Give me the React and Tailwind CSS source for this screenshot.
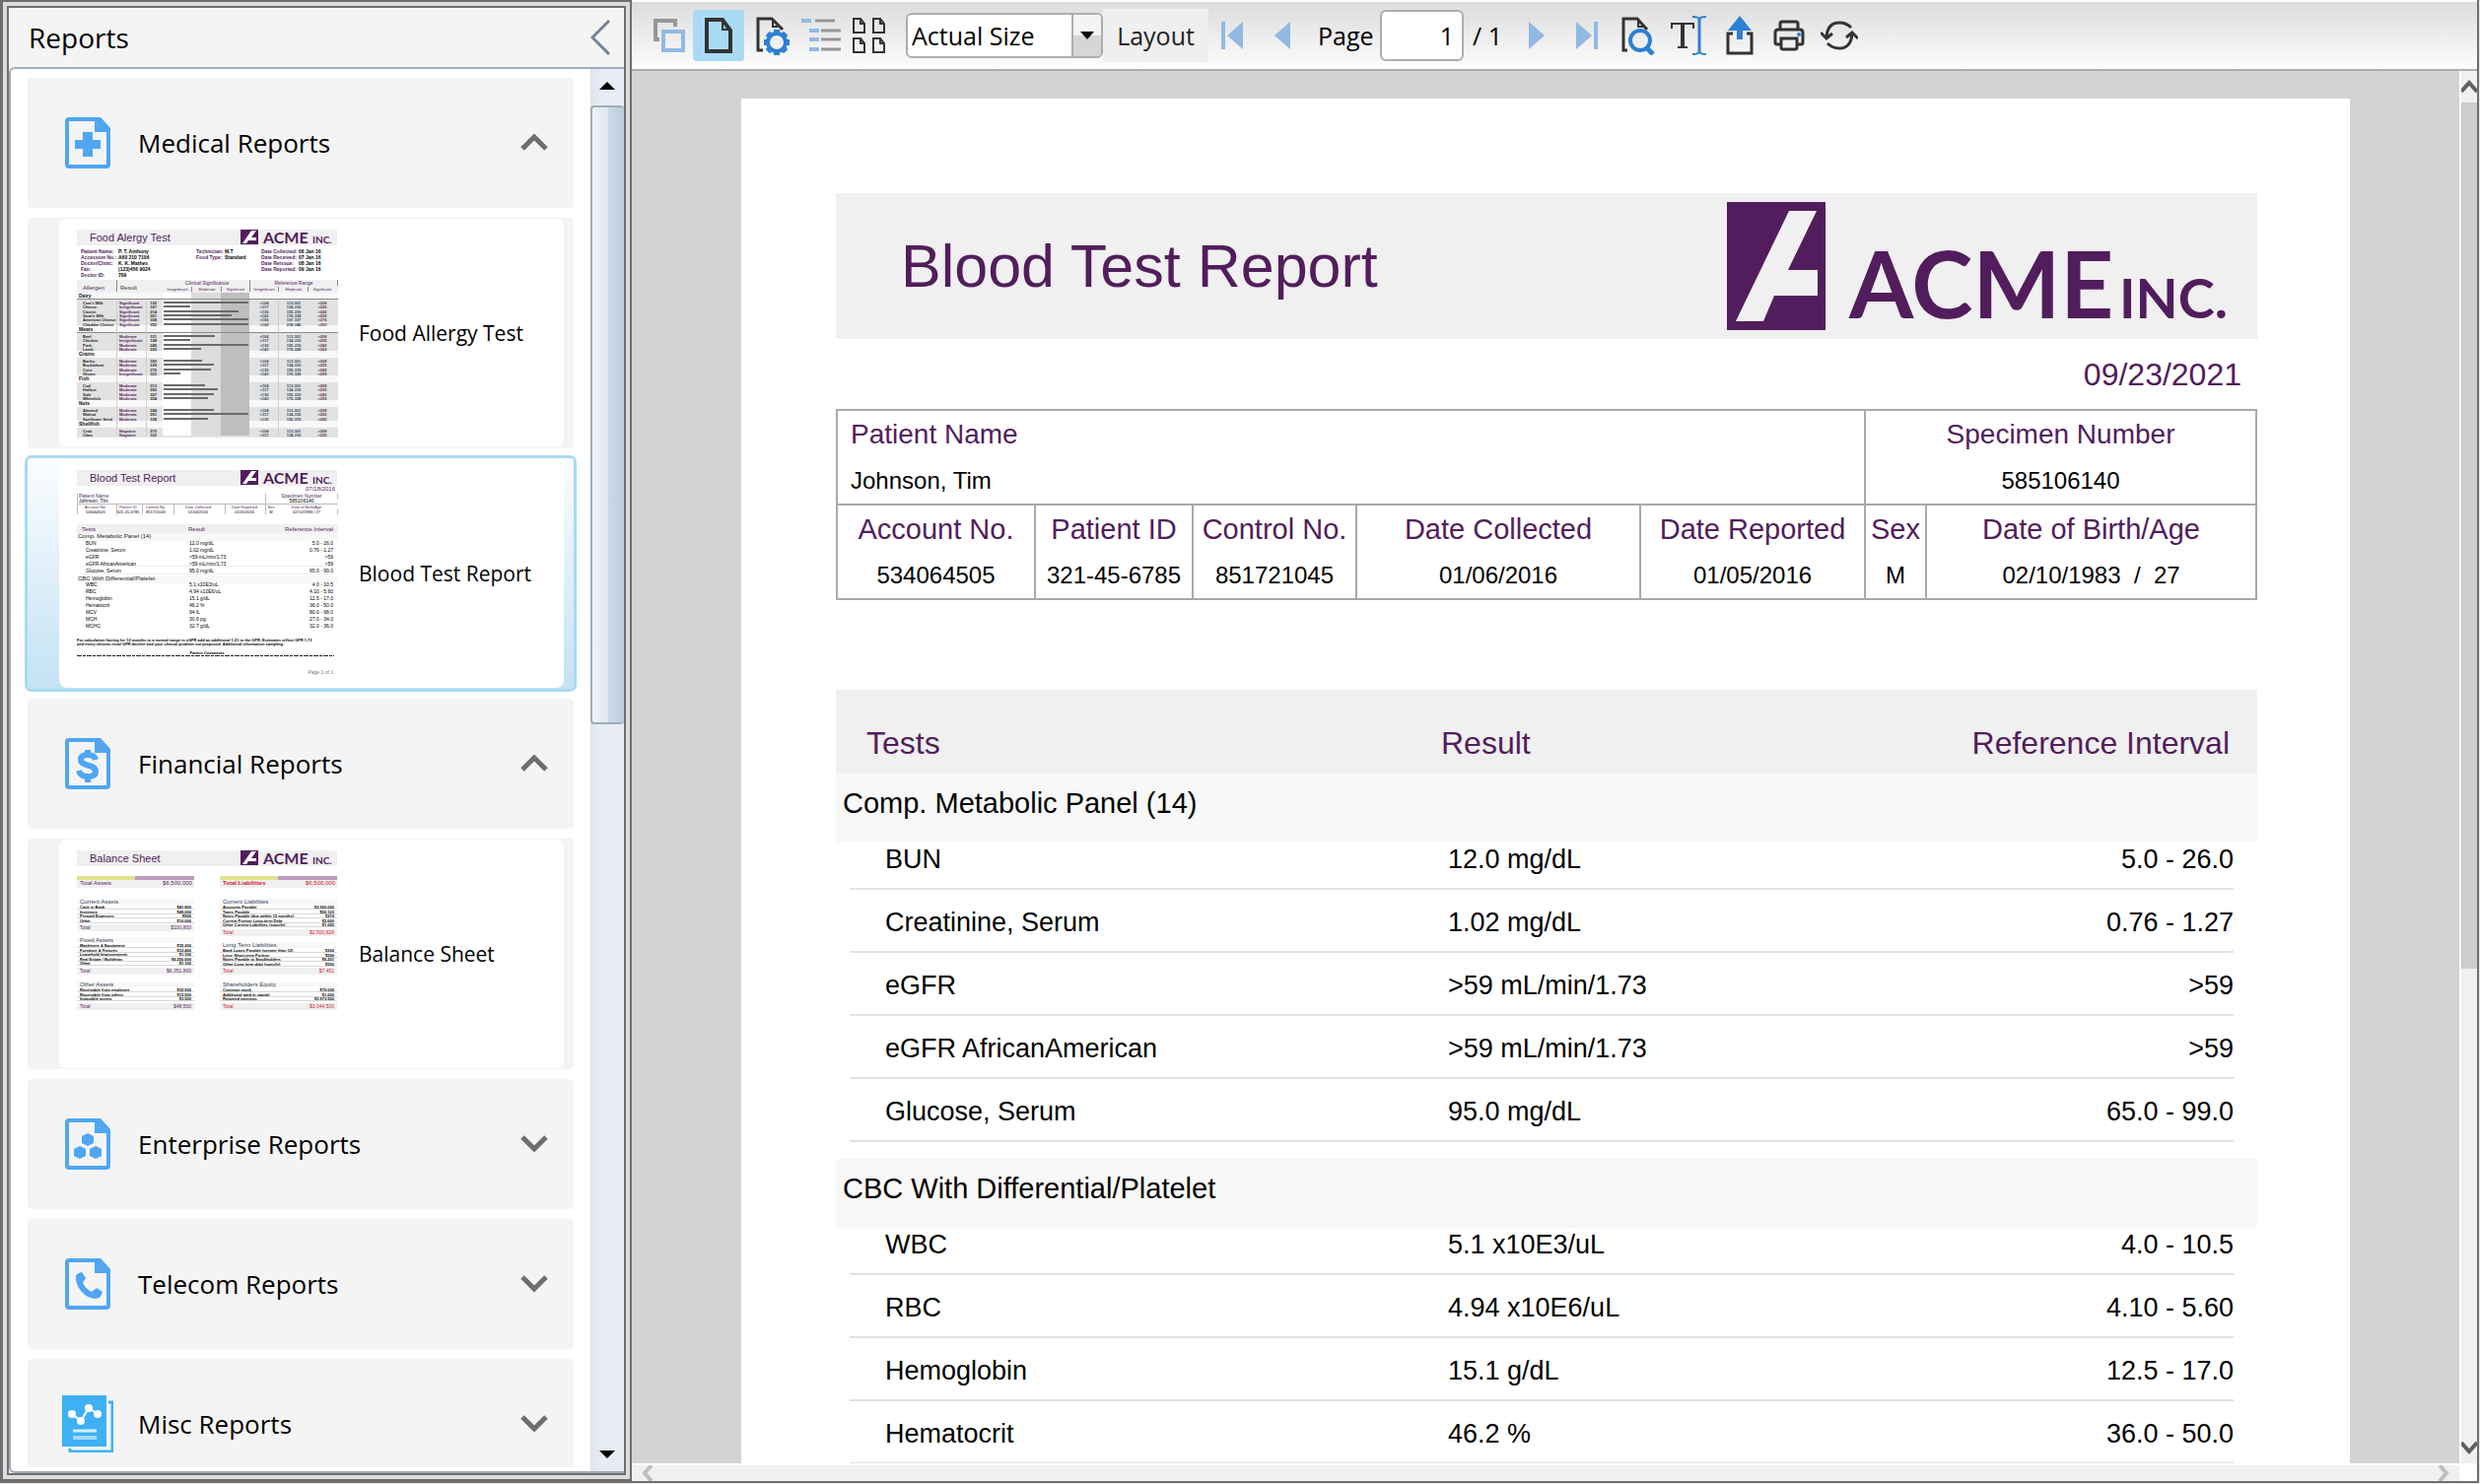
import React from "react";

const PURPLE = "#521d5c";
const BLUE = "#4fa6f3";

/* ---------- Brand ---------- */

function AcmeLogo() {
  return (
    <svg width="510" height="130" viewBox="0 0 510 130" className="overflow-visible" role="img" aria-label="ACME Inc.">
      <rect width="100" height="130" fill={PURPLE} />
      <polygon points="63,9 91,9 62,69 92,69 92,95 48,95 37,121 9,121" fill="#f0f0f0" />
      <text x="124" y="118" fontFamily="Lato, sans-serif" fontWeight="700" fontSize="94" fill={PURPLE}>ACME</text>
      <text x="398" y="118" fontFamily="Lato, sans-serif" fontWeight="700" fontSize="56" fill={PURPLE}>INC.</text>
    </svg>
  );
}

/* ---------- Thumbnails ---------- */

function Txt({ x, y, size = 5, fill = "#222", anchor = "start", bold, font = "Liberation Sans, sans-serif", children }) {
  return (
    <text x={x} y={y} fontSize={size} fill={fill} textAnchor={anchor} fontWeight={bold ? 700 : 400} fontFamily={font}>
      {children}
    </text>
  );
}

function ThumbHeader({ title }) {
  return (
    <g>
      <rect x="18" y="11" width="264" height="16" fill="#f0f0f0" />
      <Txt x={31} y={23} size={11} fill={PURPLE}>{title}</Txt>
      <rect x="184" y="11" width="18" height="15" fill={PURPLE} />
      <polygon points="195,12 200,12 195,19 200,19 200,22 192,22 190,25 186,25" fill="#fff" />
      <Txt x={207} y={25} size={16} bold fill={PURPLE} font="Lato, sans-serif">ACME</Txt>
      <Txt x={257} y={25} size={10} bold fill={PURPLE} font="Lato, sans-serif">INC.</Txt>
    </g>
  );
}

const foodGroups = [
  { name: "Dairy", y: 79, rows: [["Cow's Milk", "Significant", 86], ["Cheese", "Insignificant", 27], ["Casein", "Significant", 76], ["Goat's Milk", "Significant", 69], ["American Cheese", "Significant", 86], ["Cheddar Cheese", "Significant", 86]] },
  { name: "Meats", y: 113, rows: [["Beef", "Moderate", 52], ["Chicken", "Insignificant", 27], ["Pork", "Moderate", 86], ["Lamb", "Moderate", 38]] },
  { name: "Grains", y: 138, rows: [["Barley", "Moderate", 39], ["Buckwheat", "Moderate", 51], ["Corn", "Moderate", 48], ["Gluten", "Insignificant", 17]] },
  { name: "Fish", y: 163, rows: [["Cod", "Moderate", 42], ["Halibut", "Moderate", 55], ["Sole", "Moderate", 51], ["Whitefish", "Moderate", 45]] },
  { name: "Nuts", y: 188, rows: [["Almond", "Moderate", 51], ["Walnut", "Moderate", 86], ["Sunflower Seed", "Moderate", 45]] },
  { name: "Shellfish", y: 209, rows: [["Crab", "Negative", 0], ["Clam", "Negative", 0]] },
];

function FoodThumb() {
  const info = [
    ["Patient Name:", "P. T. Anthony"],
    ["Accession No.:", "A60 210 7106"],
    ["Doctor/Clinic:", "K. K. Mathes"],
    ["Fax:", "(123)456 9024"],
    ["Doctor ID:", "709"],
  ];
  const dates = [["Date Collected:", "06 Jan 16"], ["Date Received:", "07 Jan 16"], ["Date Reissue:", "08 Jan 16"], ["Date Reported:", "09 Jan 16"]];
  return (
    <svg width="300" height="232" viewBox="0 0 300 232" aria-hidden="true">
      <ThumbHeader title="Food Alergy Test" />
      {info.map(([k, v], i) => (
        <g key={k}>
          <Txt x={22} y={35 + i * 6} bold fill={PURPLE}>{k}</Txt>
          <Txt x={60} y={35 + i * 6} bold fill="#000">{v}</Txt>
        </g>
      ))}
      <Txt x={139} y={35} bold fill={PURPLE}>Technician:</Txt>
      <Txt x={168} y={35} bold fill="#000">M.T</Txt>
      <Txt x={139} y={41} bold fill={PURPLE}>Food Type:</Txt>
      <Txt x={168} y={41} bold fill="#000">Standard</Txt>
      {dates.map(([k, v], i) => (
        <g key={k}>
          <Txt x={205} y={35 + i * 6} bold fill={PURPLE}>{k}</Txt>
          <Txt x={243} y={35 + i * 6} bold fill="#000">{v}</Txt>
        </g>
      ))}
      <rect x="18" y="62" width="265" height="13" fill="#f0f0f0" />
      <path d="M58.5 62V74M193.500 62V74M282.500 62V68M134.500 69V74M164.500 69V74M222.500 69V74M252.500 69V74" stroke="#888" />
      <Txt x={24} y={72} size={6} fill={PURPLE}>Allergen</Txt>
      <Txt x={62} y={72} size={6} fill={PURPLE}>Result</Txt>
      <Txt x={150} y={67} fill={PURPLE} anchor="middle">Clinical Significance</Txt>
      <Txt x={238} y={67} fill={PURPLE} anchor="middle">Reference Range</Txt>
      {[120, 150, 179, 208, 238, 267].map((x, i) => (
        <Txt key={x} x={x} y={73} size={4} anchor="middle" fill={PURPLE}>{["Insignificant", "Moderate", "Significant"][i % 3]}</Txt>
      ))}
      <rect x="18" y="75" width="265" height="145" fill="#f8f8f8" />
      {foodGroups.map((g) => (
        <rect key={g.name} x="18" y={g.y + 3} width="265" height={g.rows.length * 4 + 2} fill="#e2e2e2" />
      ))}
      <rect x="105" y="75" width="29" height="145" fill="#fff" />
      <rect x="134" y="75" width="30" height="145" fill="#dcdcdc" />
      <rect x="164" y="75" width="29" height="145" fill="#bebebe" />
      <path d="M18 81.500H283M18 115.500H283" stroke="#8a8a8a" />
      {foodGroups.map((g, gi) => (
        <g key={g.name}>
          <Txt x={20} y={g.y + 1} bold fill="#111">{g.name}</Txt>
          {g.rows.map(([n, r, w], i) => {
            const y = g.y + 6 + Math.round(i * 4.3);
            return (
              <g key={n}>
                <Txt x={24} y={y + 2} size={4} bold>{n}</Txt>
                <Txt x={61} y={y + 2} size={4} bold fill={PURPLE}>{r}</Txt>
                <Txt x={99} y={y + 2} size={4} bold anchor="end">{120 + gi * 31 + i * 47}</Txt>
                {w > 0 && <rect x="106" y={y - 1} width={w} height="2" fill="#6a6a6a" />}
                <Txt x={208} y={y + 2} size={4} bold anchor="middle" fill="#345">{`<${104 + i * 13}`}</Txt>
                <Txt x={238} y={y + 2} size={4} bold anchor="middle" fill="#345">{`${113 + i * 21}-${301 + i * 9}`}</Txt>
                <Txt x={267} y={y + 2} size={4} bold anchor="middle" fill="#533">{`>${208 + i * 17}`}</Txt>
              </g>
            );
          })}
        </g>
      ))}
      <path d="M58.500 83V220M88.500 83V220M222.500 83V220" stroke="#cfcfcf" />
    </svg>
  );
}

const metabolic = [
  ["BUN", "12.0 mg/dL", "5.0 - 26.0"],
  ["Creatinine, Serum", "1.02 mg/dL", "0.76 - 1.27"],
  ["eGFR", ">59 mL/min/1.73", ">59"],
  ["eGFR AfricanAmerican", ">59 mL/min/1.73", ">59"],
  ["Glucose, Serum", "95.0 mg/dL", "65.0 - 99.0"],
];
const cbc = [
  ["WBC", "5.1 x10E3/uL", "4.0 - 10.5"],
  ["RBC", "4.94 x10E6/uL", "4.10 - 5.60"],
  ["Hemoglobin", "15.1 g/dL", "12.5 - 17.0"],
  ["Hematocrit", "46.2 %", "36.0 - 50.0"],
];
const cbcMore = [["MCV", "94 fL", "80.0 - 98.0"], ["MCH", "30.6 pg", "27.0 - 34.0"], ["MCHC", "32.7 g/dL", "32.0 - 36.0"]];

function BloodThumb() {
  const heads = [["Account No.", "534064505", 37], ["Patient ID", "321-45-6785", 70], ["Control No.", "851721045", 98], ["Date Collected", "01/06/2016", 141], ["Date Reported", "01/05/2016", 188], ["Sex", "M", 215], ["Date of Birth/Age", "02/10/1983 / 27", 251]];
  const rowsOf = (rows, y0) =>
    rows.map(([a, b, c], i) => (
      <g key={a}>
        <Txt x={27} y={y0 + i * 7} fill="#000">{a}</Txt>
        <Txt x={132} y={y0 + i * 7} fill="#000">{b}</Txt>
        <Txt x={278} y={y0 + i * 7} fill="#000" anchor="end">{c}</Txt>
      </g>
    ));
  return (
    <svg width="300" height="232" viewBox="0 0 300 232" aria-hidden="true">
      <ThumbHeader title="Blood Test Report" />
      <Txt x={280} y={32} size={6} fill={PURPLE} anchor="end">07/18/2016</Txt>
      <path d="M18 45.500H283M209.500 35V56M18.500 35V56M58.500 46V56M84.500 46V56M116.500 46V56M168.500 46V56M282.500 35V40M282.500 51V56" fill="none" stroke="#bbb" />
      <Txt x={20} y={39} fill={PURPLE}>Patient Name</Txt>
      <Txt x={20} y={44} fill="#000">Johnson, Tim</Txt>
      <Txt x={246} y={39} fill={PURPLE} anchor="middle">Specimen Number</Txt>
      <Txt x={246} y={44} fill="#000" anchor="middle">585106140</Txt>
      {heads.map(([a, b, x]) => (
        <g key={a}>
          <Txt x={x} y={50} size={4} fill={PURPLE} anchor="middle">{a}</Txt>
          <Txt x={x} y={55} size={4} fill="#000" anchor="middle">{b}</Txt>
        </g>
      ))}
      <rect x="18" y="66" width="265" height="9" fill="#f0f0f0" />
      <Txt x={23} y={73} size={6} fill={PURPLE}>Tests</Txt>
      <Txt x={131} y={73} size={6} fill={PURPLE}>Result</Txt>
      <Txt x={278} y={73} size={6} fill={PURPLE} anchor="end">Reference Interval</Txt>
      <rect x="18" y="75" width="265" height="8" fill="#f8f8f8" />
      <Txt x={19} y={80} size={6}>Comp. Metabolic Panel (14)</Txt>
      {rowsOf(metabolic, 87)}
      <rect x="18" y="118" width="265" height="8" fill="#f8f8f8" />
      <Txt x={19} y={123} size={6}>CBC With Differential/Platelet</Txt>
      {rowsOf([...cbc, ...cbcMore], 129)}
      <path d="M20 108.500H279M20 116.500H279" stroke="#eee" />
      <Txt x={18} y={185} size={4} bold fill="#000">For calculation fasting for 12 months to a normal range in eGFR add an additional 1.21 to the GFR. Estimates reflect GFR 1.73</Txt>
      <Txt x={18} y={189} size={4} bold fill="#000">and every chronic renal GFR decline and your clinical problem not proposed. Additional information sampling.</Txt>
      <Txt x={150} y={198} size={4} bold fill="#000" anchor="middle">Patient Comments</Txt>
      <path d="M18 199.500H279" stroke="#222" strokeDasharray="5 1 3 1" />
      <Txt x={278} y={218} size={5} fill="#777" anchor="end">Page 1 of 1</Txt>
    </svg>
  );
}

function BalanceBlock({ x, y, title, rows, total, red }) {
  const c = red ? "#d11a3a" : PURPLE;
  const bottom = y + 6 + rows.length * 4.5;
  const base = Math.round(bottom);
  return (
    <g>
      <rect x={x} y={y - 3} width="119" height="6" fill="#f8f8f8" />
      <Txt x={x + 3} y={y + 2} size={6} fill="#345">{title}</Txt>
      {rows.map(([n, v], i) => {
        const ry = y + 7 + Math.round(i * 4.5);
        return (
          <g key={n}>
            <Txt x={x + 3} y={ry} size={4} bold fill="#000">{n}</Txt>
            <Txt x={x + 116} y={ry} size={4} bold fill="#000" anchor="end">{v}</Txt>
            <rect x={x} y={ry} width="119" height="1" fill="#d8d8d8" />
          </g>
        );
      })}
      <rect x={x} y={base - 1} width="119" height="7" fill="#f0f0f0" />
      <Txt x={x + 3} y={base + 4} fill={c}>Total</Txt>
      <Txt x={x + 116} y={base + 4} fill={c} anchor="end">{total}</Txt>
    </g>
  );
}

function BalanceThumb() {
  return (
    <svg width="300" height="232" viewBox="0 0 300 232" aria-hidden="true">
      <ThumbHeader title="Balance Sheet" />
      {[[18, "Total Assets", PURPLE], [163, "Total Liabilities", "#d4142a"]].map(([x, label, c]) => (
        <g key={label}>
          <rect x={x} y="41" width="119" height="8" fill="#f0f0f0" />
          <rect x={x} y="37" width="59" height="4" fill="#dfe48c" />
          <rect x={x + 59} y="37" width="60" height="4" fill="#bd98bf" />
          <Txt x={x + 3} y={46} size={6} bold={x > 20} fill={c}>{label}</Txt>
          <Txt x={x + 117} y={46} size={6} fill={c} anchor="end">$6,500,000</Txt>
        </g>
      ))}
      <BalanceBlock x={18} y={63} title="Current Assets" total="$100,800" rows={[["Cash in Bank", "$41,800"], ["Inventory", "$49,000"], ["Prepaid Expenses", "$500"], ["Other", "$10,000"]]} />
      <BalanceBlock x={18} y={102} title="Fixed Assets" total="$6,351,800" rows={[["Machinery & Equipment", "$35,200"], ["Furniture & Fixtures", "$12,400"], ["Leasehold Improvements", "$1,100"], ["Real Estate / Buildings", "$6,250,000"], ["Other", "$1,100"]]} />
      <BalanceBlock x={18} y={147} title="Other Assets" total="$48,500" rows={[["Receivable from employee", "$32,500"], ["Receivable from others", "$12,500"], ["Intangible assets", "$3,500"]]} />
      <BalanceBlock x={163} y={63} red title="Current Liabilities" total="$2,500,829" rows={[["Accounts Payable", "$2,500,000"], ["Taxes Payable", "$50,123"], ["Notes Payable (due within 12 months)", "$219"], ["Current Portion Long-term Debt", "$2,000"], ["Other Current Liabilities (specify)", "$1,000"]]} />
      <BalanceBlock x={163} y={107} red title="Long Term Liabilities" total="$7,451" rows={[["Bank Loans Payable (greater than 12)", "$200"], ["Less: Short-term Portion", "$500"], ["Notes Payable to Stockholders", "$6,201"], ["Other Long term debt (specify)", "$550"]]} />
      <BalanceBlock x={163} y={147} red title="Shareholders Equity" total="$3,044,500" rows={[["Common stock", "$70,000"], ["Additional paid in capital", "$1,000"], ["Retained earnings", "$2,973,500"]]} />
    </svg>
  );
}

/* ---------- Category icons ---------- */

function DocIcon({ children }) {
  return (
    <svg width="46" height="52" viewBox="0 0 46 52" aria-hidden="true">
      <path d="M36 2H4Q2 2 2 4V48Q2 50 4 50H42Q44 50 44 48V12" fill="none" stroke={BLUE} strokeWidth="4" />
      <path d="M30 0H36L46 11V15H30Z" fill={BLUE} />
      {children}
    </svg>
  );
}
const MedicalIcon = () => (
  <DocIcon><path d="M18 15H28V23H36V32H28V40H18V32H10V23H18Z" fill={BLUE} /></DocIcon>
);
const FinanceIcon = () => (
  <DocIcon>
    <path d="M31 22C30 18 27 17 23 17C18 17 16 19 16 22C16 29 31 26 31 34C31 38 27 39 23 39C18 39 15 37 14 33M23 12V17M23 39V45" fill="none" stroke={BLUE} strokeWidth="6" />
  </DocIcon>
);
const EnterpriseIcon = () => (
  <DocIcon>
    <g fill={BLUE}>
      <polygon points="23,15 29,18 29,25 23,28 17,25 17,18" />
      <polygon points="15,28 21,31 21,38 15,41 9,38 9,31" />
      <polygon points="31,28 37,31 37,38 31,41 25,38 25,31" />
    </g>
  </DocIcon>
);
const TelecomIcon = () => (
  <DocIcon>
    <path d="M17 14L21 20L18 25Q21 31 27 34L32 30L38 34Q37 40 31 41Q23 41 16 33Q10 25 11 18Q12 15 17 14Z" fill={BLUE} />
  </DocIcon>
);
const MiscIcon = () => (
  <svg width="52" height="58" viewBox="0 0 52 58" aria-hidden="true">
    <rect width="45" height="52" fill="#3eb1f5" />
    <path d="M47 7H51V57H8V54" fill="none" stroke="#3eb1f5" strokeWidth="3" />
    <path d="M10 19L19 26L27 13L36 19" fill="none" stroke="#fff" strokeWidth="2" />
    <g fill="#fff">
      <circle cx="10" cy="19" r="4" /><circle cx="19" cy="26" r="4" /><circle cx="27" cy="13" r="4" /><circle cx="36" cy="19" r="4" />
    </g>
    <path d="M11 36H35" stroke="#d5eefc" strokeWidth="3" />
    <path d="M11 43H35" stroke="#a5d9f9" strokeWidth="4" />
  </svg>
);

function Chevron({ open }) {
  return (
    <svg width="28" height="18" viewBox="0 0 28 18" aria-hidden="true" fill="none" stroke="#6e6e6e" strokeWidth="5">
      <path d={open ? "M2 15L14 3L26 15" : "M2 2L14 14L26 2"} />
    </svg>
  );
}

/* ---------- Sidebar ---------- */

const catalog = [
  { title: "Medical Reports", icon: MedicalIcon, items: [{ name: "Food Allergy Test", thumb: FoodThumb }, { name: "Blood Test Report", thumb: BloodThumb, selected: true }] },
  { title: "Financial Reports", icon: FinanceIcon, items: [{ name: "Balance Sheet", thumb: BalanceThumb }] },
  { title: "Enterprise Reports", icon: EnterpriseIcon, items: [] },
  { title: "Telecom Reports", icon: TelecomIcon, items: [] },
  { title: "Misc Reports", icon: MiscIcon, items: [] },
];

function Category({ title, icon: Icon, open }) {
  return (
    <button type="button" aria-expanded={open} className="flex h-[132px] w-full shrink-0 items-center rounded-sm bg-[#f4f4f4] pr-[26px] pl-[35px] text-left text-[26px] leading-8">
      <span className="flex w-[52px] justify-center"><Icon /></span>
      <span className="ml-[25px] grow">{title}</span>
      <Chevron open={open} />
    </button>
  );
}

function ReportItem({ name, thumb: Thumb, selected }) {
  return (
    <button
      type="button"
      aria-pressed={!!selected}
      className={
        selected
          ? "flex h-[234px] w-full shrink-0 rounded bg-linear-to-b from-[#fbfdff] to-[#c3e2f4] py-px pr-[10px] pl-8 text-left ring-3 ring-[#a8daf1]"
          : "flex h-[234px] w-full shrink-0 rounded-sm bg-[#f4f4f4] py-px pr-[10px] pl-8 text-left"
      }
    >
      <span className="flex h-full w-full items-center rounded-lg bg-white">
        <Thumb />
        <span className="ml-1 text-[21px] leading-7">{name}</span>
      </span>
    </button>
  );
}

function Sidebar() {
  return (
    <aside className="flex w-[641px] shrink-0 border-t-2 border-r-2 border-b-4 border-l-3 border-[#6f6f6f] bg-[#dcdcdc] p-1">
      <div className="flex min-w-0 grow flex-col border-2 border-[#6f6f6f] bg-[#f4f4f4]">
        <header className="flex h-[60px] shrink-0 items-center justify-between pr-[14px] pl-5">
          <h1 className="text-[28px] leading-9">Reports</h1>
          <button type="button" aria-label="Collapse panel">
            <svg width="20" height="36" viewBox="0 0 20 36" fill="none" stroke="#708398" strokeWidth="3" aria-hidden="true"><path d="M19 1L2 18L19 35" /></svg>
          </button>
        </header>
        <div className="flex min-h-0 grow overflow-hidden rounded-l-md border-y-2 border-l-2 border-[#9facb9] bg-white">
          <nav className="mb-1 flex min-w-0 grow flex-col gap-[10px] overflow-hidden px-[17px] pt-[9px]">
            {catalog.map((c) => (
              <React.Fragment key={c.title}>
                <Category title={c.title} icon={c.icon} open={c.items.length > 0} />
                {c.items.map((it) => <ReportItem key={it.name} {...it} />)}
              </React.Fragment>
            ))}
          </nav>
          <div className="flex w-[34px] shrink-0 flex-col items-center bg-linear-to-r from-[#dce4ee] to-[#e8ecf4] to-30%">
            <svg width="16" height="8" viewBox="0 0 16 8" className="mt-[13px] mb-4 shrink-0" aria-hidden="true"><path d="M0 8L8 0L16 8Z" /></svg>
            <div className="h-[628px] w-full shrink-0 rounded border-2 border-r-0 border-[#9facb9] bg-[linear-gradient(to_right,#f0f3f7,#dfe6ee_50%,#cdd9e5_50%,#bccddd)]" />
            <div className="grow" />
            <svg width="16" height="8" viewBox="0 0 16 8" className="mb-[13px] shrink-0" aria-hidden="true"><path d="M0 0L8 8L16 0Z" /></svg>
          </div>
        </div>
      </div>
    </aside>
  );
}

/* ---------- Toolbar ---------- */

const INK = "#333333";
const ACCENT = "#2d80d2";
const PALE = "#92b9e3";

const OverlapIcon = () => (
  <svg width="32" height="34" viewBox="0 0 32 34" fill="none" aria-hidden="true">
    <path d="M6 21H2V2H22V8" stroke="#969696" strokeWidth="4" />
    <rect x="10" y="13" width="20" height="19" stroke={PALE} strokeWidth="4" />
  </svg>
);
const PageIcon = () => (
  <svg width="28" height="36" viewBox="0 0 28 36" fill="none" stroke={INK} aria-hidden="true">
    <path d="M2 2H18L26 13V34H2Z" strokeWidth="4" />
    <path d="M18 3V12H26" strokeWidth="2" />
  </svg>
);
const PageGearIcon = () => (
  <svg width="34" height="39" viewBox="0 0 34 39" fill="none" aria-hidden="true">
    <path d="M7 34H2V2H16L27 13" stroke={INK} strokeWidth="3" />
    <path d="M17 3V10H22" stroke={INK} strokeWidth="2" />
    <circle cx="21" cy="26" r="9" stroke={ACCENT} strokeWidth="4" />
    {[0, 45, 90, 135, 180, 225, 270, 315].map((a) => (
      <rect key={a} x="18" y="13" width="6" height="4" fill={ACCENT} transform={`rotate(${a} 21 26)`} />
    ))}
  </svg>
);
const OutlineIcon = () => (
  <svg width="40" height="36" viewBox="0 0 40 36" aria-hidden="true" strokeWidth="4">
    <path d="M0 3H10M8 13H18M8 22H18M8 32H18" stroke={PALE} />
    <path d="M14 3H34M20 13H40M20 22H40M20 32H40" stroke="#969696" strokeWidth="3" />
  </svg>
);
const GridIcon = () => (
  <svg width="34" height="36" viewBox="0 0 34 36" fill="none" stroke={INK} strokeWidth="2" aria-hidden="true">
    {[[0, 0], [20, 0], [0, 20], [20, 20]].map(([x, y]) => (
      <path key={`${x}-${y}`} transform={`translate(${x} ${y})`} d="M1 1H8L12 6V15H1ZM8 1V6H12" />
    ))}
  </svg>
);
const EdgeIcon = ({ flip }) => (
  <svg width="22" height="28" viewBox="0 0 22 28" fill={PALE} aria-hidden="true">
    <path d={flip ? "M18 0H22V28H18ZM0 0V28L16 14Z" : "M0 0H4V28H0ZM22 0V28L6 14Z"} />
  </svg>
);
const StepIcon = ({ flip }) => (
  <svg width="16" height="28" viewBox="0 0 16 28" fill={PALE} aria-hidden="true">
    <path d={flip ? "M0 0V28L16 14Z" : "M16 0V28L0 14Z"} />
  </svg>
);
const PageSearchIcon = () => (
  <svg width="34" height="39" viewBox="0 0 34 39" fill="none" aria-hidden="true">
    <path d="M6 34H2V2H16L26 13" stroke={INK} strokeWidth="3" />
    <path d="M17 3V10H22" stroke={INK} strokeWidth="2" />
    <circle cx="19" cy="24" r="10" stroke={ACCENT} strokeWidth="4" />
    <path d="M25 31L32 38" stroke={ACCENT} strokeWidth="5" />
  </svg>
);
const TextSelectIcon = () => (
  <svg width="36" height="40" viewBox="0 0 36 40" fill="none" aria-hidden="true">
    <path d="M1 13V8H23V13M12 8V32M7 32H17" stroke={INK} strokeWidth="2" />
    <path d="M12 8V32" stroke={INK} strokeWidth="4" />
    <path d="M29 2V38" stroke={ACCENT} strokeWidth="3" />
    <path d="M22 1Q29 1 29 4Q29 1 36 1M22 39Q29 39 29 36Q29 39 36 39" stroke={ACCENT} strokeWidth="2" />
  </svg>
);
const ExportIcon = () => (
  <svg width="28" height="40" viewBox="0 0 28 40" fill="none" aria-hidden="true">
    <path d="M7 18H2V38H26V18H21" stroke={INK} strokeWidth="3" />
    <path d="M14 0L26 15H17V24H11V15H2Z" fill={ACCENT} />
  </svg>
);
const PrintIcon = () => (
  <svg width="32" height="32" viewBox="0 0 32 32" fill="none" stroke={INK} strokeWidth="3" aria-hidden="true">
    <path d="M7 10V4Q7 2 9 2H23Q25 2 25 4V10" />
    <path d="M7 25H4Q2 25 2 23V13Q2 10 5 10H27Q30 10 30 13V23Q30 25 28 25H25" />
    <path d="M8 19H24V28Q24 30 22 30H10Q8 30 8 28Z" />
    <circle cx="26" cy="15" r="1" stroke={ACCENT} strokeWidth="2" />
  </svg>
);
const RefreshIcon = () => (
  <svg width="38" height="30" viewBox="0 0 38 30" fill="none" stroke={INK} strokeWidth="3" aria-hidden="true">
    <path d="M31 7Q26 2 19 2Q7 2 6 17M0 12L6 18L12 13" />
    <path d="M7 23Q12 28 19 28Q31 28 32 13M26 17L32 12L38 18" />
  </svg>
);

function Tool({ label, className = "", children }) {
  return <button type="button" aria-label={label} className={`shrink-0 ${className}`}>{children}</button>;
}

function Toolbar() {
  return (
    <div role="toolbar" aria-label="Report viewer" className="flex h-[72px] shrink-0 items-center border-t-2 border-b-2 border-t-white border-b-[#adadad] bg-linear-to-b from-[#dcdcdc] to-[#fdfdfd] pl-[22px] text-[25px] leading-8">
      <div className="flex items-center gap-2">
        <Tool label="Galley mode"><OverlapIcon /></Tool>
        <Tool label="Single page" className="flex h-[52px] items-center rounded bg-[#a8daf3] px-3"><PageIcon /></Tool>
      </div>
      <div className="ml-3 flex items-center gap-3">
        <Tool label="Page settings"><PageGearIcon /></Tool>
        <Tool label="Document outline"><OutlineIcon /></Tool>
        <Tool label="Thumbnails"><GridIcon /></Tool>
      </div>
      <div className="relative ml-5 h-[46px] w-[200px] shrink-0">
        <select aria-label="Zoom" className="h-full w-full appearance-none rounded-md border-2 border-[#adadad] bg-white pl-1 outline-none">
          <option>Actual Size</option>
        </select>
        <span className="pointer-events-none absolute inset-y-[2px] right-[2px] flex w-[30px] items-center justify-center rounded-r border-l-2 border-[#adadad] bg-linear-to-b from-[#f4f4f4] from-50% to-[#d6d6d6] to-50%">
          <svg width="14" height="8" viewBox="0 0 14 8" aria-hidden="true"><path d="M0 0H14L7 8Z" /></svg>
        </span>
      </div>
      <button type="button" className="h-[54px] w-[107px] shrink-0 bg-[#efefef] text-[#222]">Layout</button>
      <div className="ml-[13px] flex shrink-0 items-center gap-8">
        <Tool label="First page"><EdgeIcon /></Tool>
        <Tool label="Previous page"><StepIcon /></Tool>
      </div>
      <label htmlFor="page-number" className="ml-7 w-[54px] shrink-0 whitespace-nowrap">Page</label>
      <input id="page-number" type="text" defaultValue="1" className="ml-[9px] h-[52px] w-[85px] shrink-0 rounded-md border-2 border-[#adadad] bg-white pr-2 text-right outline-none" />
      <span className="ml-[9px] w-[32px] shrink-0 whitespace-nowrap">/ 1</span>
      <div className="ml-[25px] flex shrink-0 items-center gap-8">
        <Tool label="Next page"><StepIcon flip /></Tool>
        <Tool label="Last page"><EdgeIcon flip /></Tool>
      </div>
      <div className="ml-6 flex shrink-0 items-center gap-4">
        <Tool label="Find"><PageSearchIcon /></Tool>
        <Tool label="Select text"><TextSelectIcon /></Tool>
        <Tool label="Export" className="mx-1"><ExportIcon /></Tool>
        <Tool label="Print"><PrintIcon /></Tool>
        <Tool label="Refresh"><RefreshIcon /></Tool>
      </div>
    </div>
  );
}

/* ---------- Report ---------- */

function Field({ label, value, colSpan, align = "text-center", size = "text-[29px]" }) {
  return (
    <td colSpan={colSpan} className={`h-24 border-2 border-[#a9a9a9] p-0 whitespace-nowrap ${align}`}>
      <div className={`h-12 pt-[6px] leading-9 text-[#521d5c] ${size}`}>{label}</div>
      <div className="h-[46px] pt-[7px] text-2xl leading-8 whitespace-pre">{value}</div>
    </td>
  );
}

function PatientTable() {
  return (
    <table className="w-full table-fixed border-collapse">
      <colgroup>
        <col className="w-[201px]" /><col className="w-[160px]" /><col className="w-[166px]" /><col className="w-[288px]" /><col className="w-[228px]" /><col className="w-[62px]" /><col />
      </colgroup>
      <tbody>
        <tr>
          <Field colSpan={5} label="Patient Name" value="Johnson, Tim" align="pl-[13px] text-left" size="text-[28px]" />
          <Field colSpan={2} label="Specimen Number" value="585106140" size="text-[28px]" />
        </tr>
        <tr>
          <Field label="Account No." value="534064505" />
          <Field label="Patient ID" value="321-45-6785" />
          <Field label="Control No." value="851721045" />
          <Field label="Date Collected" value="01/06/2016" />
          <Field label="Date Reported" value="01/05/2016" />
          <Field label="Sex" value="M" />
          <Field label="Date of Birth/Age" value={"02/10/1983  /  27"} />
        </tr>
      </tbody>
    </table>
  );
}

function ResultGroup({ title, rows }) {
  return (
    <tbody>
      <tr className="bg-[#f8f8f8]">
        <th colSpan={3} scope="rowgroup" className="h-[70px] p-0 pt-[10px] pl-[7px] text-left align-top text-[29px] leading-10 font-normal">{title}</th>
      </tr>
      {rows.map(([name, result, range], i) => (
        <tr key={name} className={i === 0 ? "h-12 text-[27px] leading-8" : "h-16 text-[27px] leading-8"}>
          <td className="p-0 pl-[14px] align-bottom"><div className="border-b-2 border-[#e2e2e2] pb-[13px] pl-9">{name}</div></td>
          <td className="p-0 align-bottom"><div className="border-b-2 border-[#e2e2e2] pb-[13px] pl-[7px]">{result}</div></td>
          <td className="p-0 pr-6 text-right align-bottom"><div className="border-b-2 border-[#e2e2e2] pb-[13px]">{range}</div></td>
        </tr>
      ))}
      <tr><td colSpan={3} className="h-[17px] p-0" /></tr>
    </tbody>
  );
}

function ReportPage() {
  return (
    <article className="mx-auto mt-7 w-full max-w-[1632px] bg-white pt-24 pr-[94px] pb-24 pl-24 font-['Liberation_Sans',Arial,sans-serif] text-black">
      <header className="flex h-[148px] items-center justify-between bg-[#f0f0f0] pr-7 pl-[66px]">
        <h2 className="text-[61px] leading-[72px] text-[#521d5c]">Blood Test Report</h2>
        <AcmeLogo />
      </header>
      <p className="pt-4 pr-4 pb-[15px] text-right text-[32px] leading-10 text-[#521d5c]">09/23/2021</p>
      <PatientTable />
      <table className="mt-[91px] w-full table-fixed border-collapse">
        <colgroup><col className="w-[614px]" /><col /><col className="w-[400px]" /></colgroup>
        <thead>
          <tr className="h-[85px] bg-[#f0f0f0] text-[32px] leading-10 text-[#521d5c]">
            <th scope="col" className="p-0 pt-[22px] pl-[31px] text-left font-normal">Tests</th>
            <th scope="col" className="p-0 pt-[22px] text-left font-normal">Result</th>
            <th scope="col" className="p-0 pt-[22px] pr-7 text-right font-normal">Reference Interval</th>
          </tr>
        </thead>
        <ResultGroup title="Comp. Metabolic Panel (14)" rows={metabolic} />
        <ResultGroup title="CBC With Differential/Platelet" rows={cbc} />
      </table>
    </article>
  );
}

function Viewer() {
  return (
    <main className="mr-px flex min-w-0 grow flex-col border-r-2 border-b-2 border-[#6f6f6f] bg-white">
      <Toolbar />
      <div className="flex min-h-0 grow">
        <div className="min-w-0 grow overflow-hidden bg-[#d3d3d3]"><ReportPage /></div>
        <div className="ml-[2px] flex w-4 shrink-0 flex-col items-center bg-[#f0f0f0]">
          <svg width="16" height="14" viewBox="0 0 16 14" className="my-[9px] shrink-0" fill="none" stroke="#606060" strokeWidth="4" aria-hidden="true"><path d="M0 12L8 3L16 12" /></svg>
          <div className="h-[879px] w-full bg-[#cdcdcd]" />
          <div className="grow" />
          <svg width="16" height="14" viewBox="0 0 16 14" className="mb-[9px] shrink-0" fill="none" stroke="#606060" strokeWidth="4" aria-hidden="true"><path d="M0 2L8 11L16 2" /></svg>
        </div>
      </div>
      <div className="mt-[2px] mr-[18px] flex h-4 shrink-0 items-center justify-between bg-[#f0f0f0] px-[10px]">
        <svg width="12" height="16" viewBox="0 0 12 16" fill="none" stroke="#bfbfbf" strokeWidth="4" aria-hidden="true"><path d="M10 0L3 8L10 16" /></svg>
        <svg width="12" height="16" viewBox="0 0 12 16" fill="none" stroke="#bfbfbf" strokeWidth="4" aria-hidden="true"><path d="M2 0L9 8L2 16" /></svg>
      </div>
    </main>
  );
}

export default function App() {
  return (
    <div className="flex h-screen w-full overflow-hidden bg-[#e8e8e8] pb-px font-['Segoe_UI','Open_Sans',sans-serif] text-black">
      <Sidebar />
      <Viewer />
    </div>
  );
}
